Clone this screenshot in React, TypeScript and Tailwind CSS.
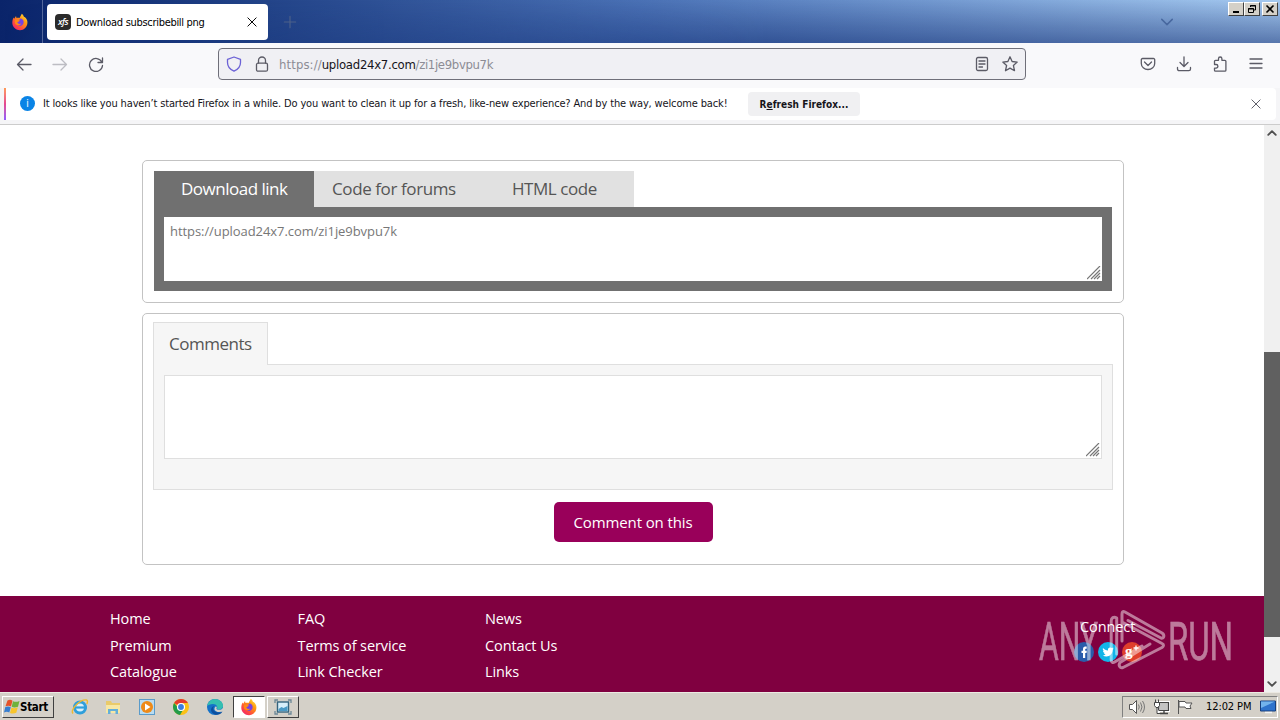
import type { ReactNode } from 'react'

const ui = "font-['DejaVu_Sans_Condensed','DejaVu_Sans',sans-serif]"

const pageTabs = [
  { label: 'Download link', pad: 'pl-[27px] tracking-[-0.5px]', active: true },
  { label: 'Code for forums', pad: 'pl-[18px] tracking-[-0.4px]', active: false },
  { label: 'HTML code', pad: 'pl-[38px] tracking-[-0.45px]', active: false },
]

const footerLinks = [
  ['Home', 'Premium', 'Catalogue'],
  ['FAQ', 'Terms of service', 'Link Checker'],
  ['News', 'Contact Us', 'Links'],
]

function Icon({ children, className = '', size = 16 }: { children: ReactNode; className?: string; size?: number }) {
  return (
    <svg
      width={size}
      height={size}
      viewBox="0 0 16 16"
      fill="none"
      stroke="currentColor"
      strokeWidth="1.3"
      strokeLinecap="round"
      strokeLinejoin="round"
      className={`shrink-0 ${className}`}
    >
      {children}
    </svg>
  )
}

function FirefoxLogo({ className = '' }: { className?: string }) {
  return (
    <svg width="18" height="18" viewBox="0 0 18 18" className={`shrink-0 ${className}`}>
      <defs>
        <linearGradient id="fox" x1="1" y1="0" x2="0.2" y2="1">
          <stop offset="0" stopColor="#fff04f" />
          <stop offset="0.4" stopColor="#ff980e" />
          <stop offset="0.75" stopColor="#ff4a40" />
          <stop offset="1" stopColor="#ee2470" />
        </linearGradient>
      </defs>
      <path d="M10.8.8c1.3 1 1.8 2 2.1 3 .9.1 1.8 1 2.4 2 .9 1.500 1.200 2.600 1.100 4.200-.2 4-3.400 7.200-7.400 7.200S1.300 14 1.300 9.700c0-2.200.5-3.900 1.500-5.200l.4 1.200L5 2.900l.5 2c1-.3 2-.3 3 .1.800-1.300 1.300-2.500 2.300-4.200z" fill="url(#fox)" />
      <path d="M9 5.500c2.500 0 4 2 3.600 4.200-.3 2-1.800 3.200-3.700 3.200-2 0-3.500-1.500-3.500-3.300 0-.9.3-1.500.9-2 .6.500 1.300.3 2.200.4-.3-.8-.1-1.700.5-2.500z" fill="#7542e5" />
      <path d="M4.300 6.600c1.500-.5 2.800 0 4.200 1.100-.3 1-1.700 1-2.200 1.900.6 1.500 2.400 1.700 4 .9-.9 2.300-5 2.500-6.300-.3-.4-1.300-.3-2.500.3-3.600z" fill="#ff8a16" />
    </svg>
  )
}

function TitleBar() {
  return (
    <div className="relative flex h-[43px] bg-linear-to-r from-[#0a246a] via-[#4a71b5] to-[#a6caf0]">
      <div className="absolute inset-0 bg-linear-to-b from-transparent to-[#0a246a]/50 [mask-image:linear-gradient(to_right,transparent,black_60%)]"></div>
      <div className="relative flex w-full items-start">
        <div className="flex h-[43px] w-[43px] items-center justify-center border-r border-[#53679b] pr-[3px]">
          <FirefoxLogo />
        </div>
        <div className="mt-1 ml-1 flex h-9 w-[221px] items-center rounded bg-white px-2">
          <div className="flex h-4 w-4 items-center justify-center rounded bg-[#2b2b2b] font-['Open_Sans',sans-serif] text-[9px] font-semibold tracking-[-0.5px] text-white italic">
            xfs
          </div>
          <span className={`${ui} mt-[2px] ml-[5px] text-[11px] tracking-[-0.3px] whitespace-nowrap text-black`}>Download subscribebill png</span>
          <Icon size={12} className="mr-[2px] ml-auto text-black">
            <path d="M2.500 2.500l11 11M13.500 2.500l-11 11" />
          </Icon>
        </div>
        <Icon size={14} className="mt-[15px] ml-[15px] text-[#4d6189]">
          <path d="M8 1.500v13M1.500 8h13" />
        </Icon>
        <Icon size={14} className="mt-[15px] ml-auto text-[#48689f]">
          <path d="M2 5l6 6 6-6" strokeWidth="1.700" />
        </Icon>
        <div className="mt-[2px] mr-[2px] ml-[54px] flex">
          {['min', 'restore', 'close'].map((kind) => (
            <div
              key={kind}
              className={`flex h-[14px] w-4 items-center justify-center border border-t-white border-l-white border-r-[#404040] border-b-[#404040] bg-[#d4d0c8] ${kind === 'close' ? 'ml-[2px]' : ''}`}
            >
              <svg width="10" height="10" viewBox="0 0 10 10" fill="none" stroke="#000">
                {kind === 'min' && <path d="M2 8h6" strokeWidth="2" />}
                {kind === 'restore' && <path d="M3.500 3V1.500h5v4.500H7M3 2h6M1.500 4.500h5v4h-5zM1 5h6" />}
                {kind === 'close' && <path d="M1.500 1.500l7 7M8.500 1.500l-7 7" strokeWidth="1.600" />}
              </svg>
            </div>
          ))}
        </div>
      </div>
    </div>
  )
}

function Toolbar() {
  return (
    <div className="flex h-[45px] items-center bg-[#f9f9fb] pb-[3px] text-[#5b5b66]">
      <Icon className="ml-4">
        <path d="M15 8.500H1.500M7 3L1.500 8.500 7 14" />
      </Icon>
      <Icon className="ml-5 text-[#bdbdc3]">
        <path d="M1 8.500h13.500M9 3l5.500 5.500L9 14" />
      </Icon>
      <Icon className="ml-5">
        <path d="M13.800 6A6.500 6.500 0 1 0 14.500 9.500M14.500 2v4.500H10" />
      </Icon>
      <div className="ml-[114px] flex h-8 w-[808px] items-center rounded border border-[#6f6f79] bg-[#f0f0f4] px-[7px]">
        <Icon className="text-[#6c62d6]">
          <path d="M8 1l6.500 2.300v3.200c0 4-2.500 7-6.500 8.700C4 13.500 1.500 10.500 1.500 6.500V3.300z" />
        </Icon>
        <Icon className="ml-3">
          <rect x="2.500" y="7.200" width="11" height="8" rx="1.500" />
          <path d="M4.500 7V4.500a3.500 3.500 0 0 1 7 0V7" />
        </Icon>
        <div className={`${ui} mt-[2px] ml-[9px] text-[13px] tracking-[-0.35px] whitespace-nowrap text-[#8c8c94]`}>
          <span className="tracking-[0.1px]">https://</span>
          <span className="tracking-[-0.28px] text-[#15141a]">upload24x7.com</span>/zi1je9bvpu7k
        </div>
        <Icon className="ml-auto">
          <rect x="2.500" y="1.500" width="11" height="13" rx="1.500" />
          <path d="M5 5h6M5 8h6M5 11h3.500" />
        </Icon>
        <Icon className="ml-3">
          <path d="M8 .8l2.100 4.700 5.100.6-3.800 3.400 1.100 5.200L8 12.100l-4.500 2.600 1.100-5.200L.8 6.100l5.100-.6z" />
        </Icon>
      </div>
      <Icon className="ml-auto">
        <path d="M2.500 2.500h11a1.200 1.200 0 0 1 1.200 1.200v3.800a6.700 6 0 0 1-13.400 0V3.700a1.200 1.200 0 0 1 1.200-1.200zM4.500 6L8 9.500 11.500 6" />
      </Icon>
      <Icon className="ml-5">
        <path d="M8 .8v9.500M4 6.500l4 4 4-4M1.500 11.500v1.500a1.700 1.700 0 0 0 1.700 1.700h9.600a1.700 1.700 0 0 0 1.700-1.700v-1.500" />
      </Icon>
      <Icon className="ml-5">
        <path d="M2.500 7.500V5.300a1 1 0 0 1 1-1h3V2.700a1.700 1.700 0 0 1 3.400 0v1.600h3a1 1 0 0 1 1 1v8.900a1 1 0 0 1-1 1H3.500a1 1 0 0 1-1-1v-2.100h1.600a1.800 1.800 0 0 0 0-3.600H2.500z" />
      </Icon>
      <Icon className="mr-4 ml-5">
        <path d="M2 3h12M2 7.500h12M2 12h12" />
      </Icon>
    </div>
  )
}

function NotificationBar() {
  return (
    <div className="h-[37px] border-b border-[#cccccc] bg-[#f5f5f7] pl-1">
      <div className="flex h-8 w-[1272px] rounded-r bg-white">
        <div className="w-[2px] bg-linear-to-b from-[#ff9a56] via-[#e5468f] to-[#9059ff]"></div>
        <div className={`${ui} mt-2 ml-[14px] flex h-[15px] w-[15px] items-center justify-center rounded-full bg-[#0a84e6] text-[10px] text-white`}>
          i
        </div>
        <p className={`${ui} mt-2 ml-2 w-[705px] text-[11px] leading-4 tracking-[-0.145px] whitespace-nowrap text-[#15141a]`}>
          It looks like you haven’t started Firefox in a while. Do you want to clean it up for a fresh, like-new experience? And by the way, welcome back!
        </p>
        <button className={`${ui} mt-1 h-6 w-28 rounded bg-[#f0f0f2] pt-px text-[10px] font-bold tracking-[0.03px] whitespace-nowrap text-[#15141a]`}>
          R<span className="underline">e</span>fresh Firefox...
        </button>
        <Icon size={12} className="mt-[10px] mr-[14px] ml-auto text-[#5b5b66]">
          <path d="M2.500 2.500l11 11M13.500 2.500l-11 11" />
        </Icon>
      </div>
    </div>
  )
}

function ResizeGrip() {
  return (
    <svg width="14" height="14" viewBox="0 0 14 14" stroke="#777" className="absolute right-[1px] bottom-[1px]">
      <path d="M0 13L13 0M4 13l9-9M7 13l6-6M10 13l3-3" strokeWidth="1.200" />
    </svg>
  )
}

function LinkCard() {
  return (
    <section className="h-[143px] rounded-[5px] border border-[#c3c3c3] px-[11px] pt-[10px]">
      <div className="flex h-9">
        {pageTabs.map((tab) => (
          <button
            key={tab.label}
            className={`w-40 pb-px text-left text-[17px] whitespace-nowrap ${tab.pad} ${tab.active ? 'bg-[#707070] text-white' : 'bg-[#e1e1e1] text-[#555]'}`}
          >
            {tab.label}
          </button>
        ))}
      </div>
      <div className="h-[84px] w-[958px] bg-[#707070] p-[10px]">
        <div className="relative h-16 bg-white px-[6px] pt-[5px] text-[13px] leading-[18px] tracking-[-0.07px] text-[#777]">
          https://upload24x7.com/zi1je9bvpu7k
          <ResizeGrip />
        </div>
      </div>
    </section>
  )
}

function CommentsCard() {
  return (
    <section className="mt-[10px] h-[252px] rounded-[5px] border border-[#c3c3c3] px-[10px] pt-2">
      <div className="relative z-10 -mb-px flex h-[43px] w-[115px] items-center border border-b-0 border-[#dfdfdf] bg-[#f6f6f6] pl-[15px] text-[17px] tracking-[-0.5px] text-[#555]">
        Comments
      </div>
      <div className="h-[126px] w-[960px] border border-[#dfdfdf] bg-[#f6f6f6] p-[10px]">
        <div className="relative h-[84px] border border-[#dfdfdf] bg-white">
          <ResizeGrip />
        </div>
      </div>
      <button className="mx-auto mt-3 block h-10 w-[159px] rounded-[5px] bg-[#99005a] text-[15px] tracking-[-0.12px] whitespace-nowrap text-white">
        Comment on this
      </button>
    </section>
  )
}

function Watermark() {
  return (
    <svg width="204" height="70" viewBox="0 0 204 70" className="absolute top-[9px] left-[1037px]" opacity="0.48">
      <g fill="#fff" stroke="#fff" strokeWidth="0.6" fontFamily="Roboto, sans-serif" fontSize="53">
        <text x="2" y="54.500" textLength="59" lengthAdjust="spacingAndGlyphs">ANY</text>
        <text x="131" y="54.500" textLength="65" lengthAdjust="spacingAndGlyphs">RUN</text>
      </g>
      <path
        d="M113 39L83 57.500c-2 3 0 6 3 5l39-20c2-1.500 2-3 0-4L85 17V9c0-2.500 1-3 3-2l37 21c3 2 2 6-1 5L91 15.500M79.700 13c-3-2-5.500 0-5.500 3v39c0 2 1.500 3 3.500 2L105 41M79.700 13v36M85 17v19"
        fill="none"
        stroke="#fff"
        strokeWidth="3"
        strokeLinejoin="round"
        strokeLinecap="round"
      />
    </svg>
  )
}

function Footer() {
  return (
    <footer className="relative mt-[31px] flex h-24 bg-[#800040] pl-[110px] text-[14.5px] tracking-[-0.1px] text-white">
      {footerLinks.map((column) => (
        <ul key={column[0]} className="w-[187.5px] pt-[10px]">
          {column.map((link) => (
            <li key={link} className="h-[26.5px] leading-[26.5px] whitespace-nowrap">
              {link}
            </li>
          ))}
        </ul>
      ))}
      <div className="mt-[21px] ml-auto w-[184px]">
        <div className="leading-5">Connect</div>
        <div className="mt-[5px] -ml-[6px] flex gap-1">
          <svg width="20" height="20" viewBox="0 0 20 20">
            <circle cx="10" cy="10" r="10" fill="#2a5caa" />
            <path d="M9 16v-5H7.500V8.800H9V7.200C9 5.500 9.800 4.600 11.300 4.600h1.400v2.200h-.9c-.5 0-.6.3-.6.7v1.300h1.600l-.3 2.200h-1.300v5z" fill="#fff" />
          </svg>
          <svg width="20" height="20" viewBox="0 0 20 20">
            <circle cx="10" cy="10" r="10" fill="#12b4e8" />
            <path d="M5 6c1.300 1.500 3 2.300 5 2.400-.3-2 .7-3 2.200-3 .7 0 1.300.3 1.700.7l1.500-.6-.8 1.300 1.200-.2-1.100 1.200c.1 3.500-2.600 6.700-6.200 6.700-1.400 0-2.700-.4-3.700-1.100 1.200.1 2.300-.2 3.100-.8-1-.1-1.700-.7-2-1.600h.9C5.700 10.700 5 9.800 5 8.700l.9.2C5 8.200 4.500 7.200 5 6z" fill="#fff" />
          </svg>
          <svg width="20" height="20" viewBox="0 0 20 20">
            <circle cx="10" cy="10" r="10" fill="#df3f2c" />
            <text x="3" y="13.500" fill="#fff" fontSize="15" fontWeight="700" fontFamily="Liberation Serif, serif">g</text>
            <path d="M11.500 6h5M14 3.500v5" stroke="#fff" strokeWidth="1.300" />
          </svg>
        </div>
      </div>
      <Watermark />
    </footer>
  )
}

function Scrollbar() {
  return (
    <div className="flex w-4 flex-col items-center bg-[#f0f0f0] text-[#505050]">
      <Icon size={10} className="mt-[3px]">
        <path d="M2 11l6-6 6 6" strokeWidth="3" />
      </Icon>
      <div className="mt-[214px] h-[285px] w-full bg-[#606060]"></div>
      <Icon size={10} className="mt-auto mb-[3px]">
        <path d="M2 5l6 6 6-6" strokeWidth="3" />
      </Icon>
    </div>
  )
}

const raised = 'border border-t-white border-l-white border-r-[#404040] border-b-[#404040]'

function Taskbar() {
  return (
    <div className={`${ui} flex h-7 items-center border-t border-[#ece9e2] bg-[#d4d0c8] text-[11px] text-black`}>
      <button className={`${raised} ml-[2px] flex h-[22px] w-[52px] items-center text-[11.5px] font-bold tracking-[-0.3px]`}>
        <svg width="16" height="16" viewBox="0 0 16 16" className="ml-px shrink-0">
          <path d="M3.500 1.500c2-1 3.500-.8 5 .2L7 7.500c-1.500-1-3.500-1-5.500-.2z" fill="#e5532a" />
          <path d="M9 2.200c2 1 4 .8 6.500-.2L14 7.700c-2.500 1-4.500 1-6.300.1z" fill="#6fb23b" />
          <path d="M1.300 8c2-.8 4-.7 5.500.2l-1.500 5.400c-1.500-1-3.500-1-5.300-.2z" fill="#377ed0" />
          <path d="M7.500 8.500c2 1 4 .8 6.300-.2l-1.500 5.500c-2 1-4.500 1-6.300.1z" fill="#f8c52b" />
        </svg>
        <span className="mt-[2px]">Start</span>
      </button>
      <svg width="18" height="18" viewBox="0 0 18 18" className="ml-[17px] shrink-0">
        <circle cx="9" cy="9.500" r="5.500" fill="#d9effa" stroke="#2f9fdb" strokeWidth="3" />
        <path d="M5 9.500h11" stroke="#2f9fdb" strokeWidth="2.200" />
        <path d="M2 15.500C-1 12 9 1 15.500 2c1.500.5 1 3 .2 4" fill="none" stroke="#edb932" strokeWidth="1.400" />
      </svg>
      <svg width="18" height="18" viewBox="0 0 18 18" className="ml-[15px] shrink-0">
        <path d="M2 3h5l1 2h8v10H2z" fill="#e9ca6a" />
        <path d="M2 7h14v8H2z" fill="#f7e7a4" />
        <path d="M4 16v-5h10v5h-2.500v-3h-5v3z" fill="#64afd9" />
      </svg>
      <svg width="18" height="18" viewBox="0 0 18 18" className="ml-4 shrink-0">
        <rect x="1.500" y="1.500" width="15" height="15" fill="#b9dcf1" stroke="#5a9bca" />
        <circle cx="9" cy="9" r="6" fill="#ee8a18" />
        <path d="M7 5.500l5.500 3.500L7 12.500z" fill="#fff" />
      </svg>
      <svg width="18" height="18" viewBox="0 0 18 18" className="ml-4 shrink-0">
        <circle cx="9" cy="9" r="8" fill="#fbc116" />
        <path d="M9 9L2.100 5A8 8 0 0 1 15.900 5H9z" fill="#e33b2e" />
        <path d="M9 9H5.500L2.100 5a8 8 0 0 0 5.900 12l3.500-6z" fill="#229b4a" />
        <circle cx="9" cy="9" r="3.500" fill="#3b7de0" stroke="#fff" strokeWidth="1.200" />
      </svg>
      <svg width="18" height="18" viewBox="0 0 18 18" className="ml-4 shrink-0">
        <circle cx="9" cy="9" r="8" fill="#1572c8" />
        <path d="M1.200 8C2 4 5 1 9 1c5 0 8.500 4 8 7.500-.4 2.500-4 3.500-6 2.500 1-2-.3-5-4-5-3 0-5 1-5.800 2z" fill="#35bfb0" />
        <path d="M8 8c-2 3 0 6.500 5 6.500 1.500 0 2.500-.5 3.500-1-2 3.500-7 4.500-10 1.500C4 12.500 5 9 8 8z" fill="#0c4f9e" />
        <path d="M9.500 8.500c2 0 1 1.500 1 2.500 1.500 1.500 5 1 6.500-1v3c-3 2-8 1-8.500-1.500-.2-1.200.3-2.200 1-3z" fill="#d4d0c8" />
      </svg>
      <div className="ml-[9px] flex h-[22px] w-8 items-center justify-center border border-t-[#404040] border-l-[#404040] border-r-white border-b-white bg-white">
        <FirefoxLogo />
      </div>
      <div className={`${raised} ml-[2px] flex h-[22px] w-8 items-center justify-center`}>
        <svg width="18" height="16" viewBox="0 0 18 16">
          <rect x="3.500" y="3" width="11" height="10" fill="#d8effa" stroke="#35647e" strokeWidth="1.400" />
          <path d="M4.500 10l3-2 2 1 4-2v5h-9z" fill="#4b9ac5" />
          <path d="M1 4V1h3M14 1h3v3M17 12v3h-3M4 15H1v-3" fill="none" stroke="#6b8796" strokeWidth="1.300" />
        </svg>
      </div>
      <div className="mr-[2px] ml-auto flex h-[22px] w-[156px] items-center border border-t-[#808080] border-l-[#808080] border-r-white border-b-white">
        <svg width="18" height="16" viewBox="0 0 18 16" fill="none" stroke="#555" className="ml-[5px] shrink-0">
          <path d="M1.500 5.500h3l4-4v13l-4-4h-3z" fill="#fff" />
          <path d="M10.500 5.500q1.500 2.500 0 5M12.500 3.500q3 4.500 0 9M14.500 2q4 6 0 12" stroke="#777" />
        </svg>
        <svg width="18" height="16" viewBox="0 0 18 16" fill="none" stroke="#444" className="ml-[7px] shrink-0">
          <path d="M5.500 3.500h10v8h-10z" fill="#c4c4c4" stroke="#fff" strokeWidth="3" />
          <path d="M5.500 3.500h10v8h-10z" fill="#c4c4c4" strokeWidth="1.200" />
          <path d="M11 12v2M7 14.500h8" strokeWidth="1.400" />
          <path d="M1.500 3.500h5v3l-1.500 2h-2l-1.500-2zM2.500 3V.5M5.500 3V.5M4 8.500v6h3" fill="#fff" />
        </svg>
        <svg width="18" height="16" viewBox="0 0 18 16" fill="#fff" stroke="#555" className="ml-[5px] shrink-0">
          <path d="M2.500 1v14M3 2.500h6l1 1.500h6l-2 3 1 2.500h-5l-1-1.500H3z" />
        </svg>
        <span className="mt-[2px] ml-3 text-[11px] tracking-[-0.1px] whitespace-nowrap">12:02 PM</span>
        <svg width="16" height="16" viewBox="0 0 16 16" className="mr-px ml-auto shrink-0">
          <path d="M.5 2h15v10H.5z" fill="#2f73cc" stroke="#173f7e" />
          <path d="M1 2.500h14L1 9z" fill="#73b3ed" />
          <path d="M5 13.500h7" stroke="#f3f3f3" strokeWidth="1.500" />
        </svg>
      </div>
    </div>
  )
}

export default function App() {
  return (
    <div className="flex h-[720px] w-[1280px] flex-col overflow-hidden bg-white">
      <TitleBar />
      <Toolbar />
      <NotificationBar />
      <div className="flex h-[567px]">
        <main className="w-[1264px] bg-white font-['Open_Sans',sans-serif]">
          <div className="ml-[142px] w-[982px] pt-[35px]">
            <LinkCard />
            <CommentsCard />
          </div>
          <Footer />
        </main>
        <Scrollbar />
      </div>
      <Taskbar />
    </div>
  )
}
